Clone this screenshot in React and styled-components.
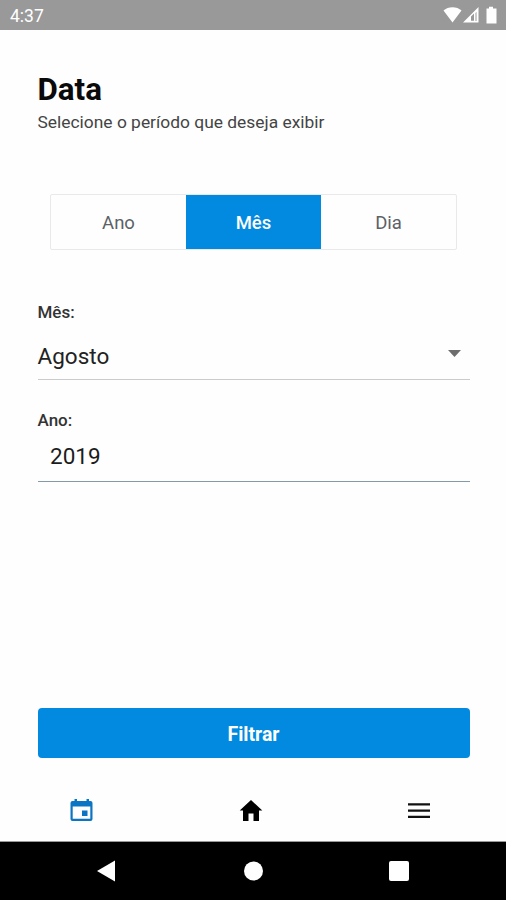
import React, { useState } from 'react';
import styled, { createGlobalStyle } from 'styled-components';

const GlobalStyle = createGlobalStyle`
  * {
    box-sizing: border-box;
  }

  body {
    margin: 0;
    background: #fff;
    font-family: Roboto, sans-serif;
  }
`;

const Screen = styled.div`
  display: flex;
  flex-direction: column;
  width: 506px;
  height: 900px;
  overflow: hidden;
  background: #fefefe;
`;

const StatusBar = styled.header`
  display: flex;
  justify-content: space-between;
  height: 30px;
  padding: 0 7px 0 10px;
  background: #999;
  color: #fff;
`;

const Clock = styled.span`
  font-size: 17.5px;
  line-height: 32px;
`;

const StatusIcons = styled.svg`
  width: 56px;
  height: 30px;
`;

const Content = styled.main`
  flex: 1;
  display: flex;
  flex-direction: column;
  padding: 40px 36.5px 0 37.5px;
`;

const Title = styled.h1`
  margin: 0;
  font-size: 31.3px;
  font-weight: 700;
  line-height: 40px;
  color: #0a0a0a;
`;

const Subtitle = styled.p`
  margin: 0;
  font-size: 17.4px;
  line-height: 25px;
  color: #444;
`;

const Segments = styled.div`
  display: flex;
  height: 56px;
  margin: 59px 12.5px 0;
  border: 1.5px solid #e8e9eb;
  border-radius: 2px;
`;

const Segment = styled.button`
  flex: 1;
  padding: 2px 0 0;
  border: none;
  background: ${({ $active }) => ($active ? '#018ae0' : 'transparent')};
  color: ${({ $active }) => ($active ? '#fff' : '#5b6167')};
  font-family: inherit;
  font-size: 18.5px;
  font-weight: ${({ $active }) => ($active ? 500 : 400)};
`;

const Label = styled.label`
  margin-top: ${({ $top }) => $top}px;
  font-size: 17px;
  font-weight: 500;
  line-height: 20px;
  color: #333;
`;

const Select = styled.div`
  display: flex;
  align-items: center;
  justify-content: space-between;
  height: 58px;
  padding: 11px 9px 0 0;
  border-bottom: 1px solid #cbcbcb;
  font-size: 22.5px;
  color: #222;
`;

const Caret = styled.svg`
  width: 13px;
  height: 7px;
  margin-bottom: 6px;
`;

const Input = styled.input`
  height: 52px;
  padding: 0 12.5px 0;
  border: none;
  border-bottom: 1.5px solid #849aa5;
  outline: none;
  background: transparent;
  font-family: inherit;
  font-size: 22.5px;
  color: #1c1c1c;
`;

const FilterButton = styled.button`
  height: 50px;
  margin-top: auto;
  padding: 3px 0 0;
  border: none;
  border-radius: 4px;
  background: #018ae0;
  color: #fff;
  font-family: inherit;
  font-size: 19.5px;
  font-weight: 700;
`;

const TabBar = styled.nav`
  display: flex;
  justify-content: space-between;
  height: 84px;
  padding: 41px 75px 0 70px;
  border-bottom: 1px solid #999;
`;

const TabIcon = styled.svg`
  width: 24px;
  height: 24px;
`;

const SystemBar = styled.footer`
  display: flex;
  align-items: center;
  justify-content: space-between;
  height: 58px;
  padding: 0 96px 0 96px;
  background: #000;
`;

const SystemIcon = styled.svg`
  width: 22px;
  height: 22px;
  fill: #fff;
`;

const periods = ['Ano', 'Mês', 'Dia'];

const App = () => {
  const [period, setPeriod] = useState('Mês');
  const [year, setYear] = useState('2019');

  return (
    <>
      <GlobalStyle />
      <Screen>
        <StatusBar>
          <Clock>4:37</Clock>
          <StatusIcons viewBox="0 0 56 30" fill="#fff">
            <path d="M0.5 10.5 C5 6 14 6 18.5 10.5 L9.5 22.5 Z" />
            <path d="M20 22.5 L35.5 7 V22.5 Z M31 13.5 L28 16.5 V20.8 H31 Z M32.5 13 V21 H33.5 V12 Z" fillRule="evenodd" />
            <path d="M46 6.8 H50 V8.5 H53.5 V23.5 H43.5 V8.5 H46 Z" />
          </StatusIcons>
        </StatusBar>

        <Content>
          <Title>Data</Title>
          <Subtitle>Selecione o período que deseja exibir</Subtitle>

          <Segments>
            {periods.map((item) => (
              <Segment
                key={item}
                $active={item === period}
                onClick={() => setPeriod(item)}
              >
                {item}
              </Segment>
            ))}
          </Segments>

          <Label $top={52}>Mês:</Label>
          <Select>
            Agosto
            <Caret viewBox="0 0 13 7" fill="#6d6d6d">
              <path d="M0 0 H13 L6.5 7 Z" />
            </Caret>
          </Select>

          <Label $top={30} htmlFor="year">
            Ano:
          </Label>
          <Input
            id="year"
            value={year}
            onChange={(e) => setYear(e.target.value)}
          />

          <FilterButton>Filtrar</FilterButton>
        </Content>

        <TabBar>
          <TabIcon viewBox="0 0 24 24" fill="#0b75c4" fillRule="evenodd">
            <path d="M4.5 0 H7 V2 H16.5 V0 H19 V2 H20.5 Q22.5 2 22.5 4 V20 Q22.5 22 20.5 22 H2.5 Q0.5 22 0.5 20 V4 Q0.5 2 2.5 2 H4.5 Z M2.7 7.5 V19.8 H20.3 V7.5 Z" />
            <path d="M12 11.5 H17.5 V17 H12 Z" />
          </TabIcon>
          <TabIcon viewBox="0 0 24 24" fill="#000">
            <path d="M12 1 L23.3 11.5 H20 V22 H14.5 V14.5 H9.5 V22 H4 V11.5 H0.7 Z" />
          </TabIcon>
          <TabIcon viewBox="0 0 24 24" fill="#111">
            <path d="M1 4.2 H23 V6.4 H1 Z M1 10.5 H23 V12.7 H1 Z M1 16.8 H23 V19 H1 Z" />
          </TabIcon>
        </TabBar>

        <SystemBar>
          <SystemIcon viewBox="0 0 22 22">
            <path d="M19 0.5 V21.5 L1 11 Z" />
          </SystemIcon>
          <SystemIcon viewBox="0 0 22 22">
            <circle cx="11.5" cy="11" r="9.5" />
          </SystemIcon>
          <SystemIcon viewBox="0 0 22 22">
            <rect x="1" y="1" width="20" height="20" rx="2" />
          </SystemIcon>
        </SystemBar>
      </Screen>
    </>
  );
};

export default App;
